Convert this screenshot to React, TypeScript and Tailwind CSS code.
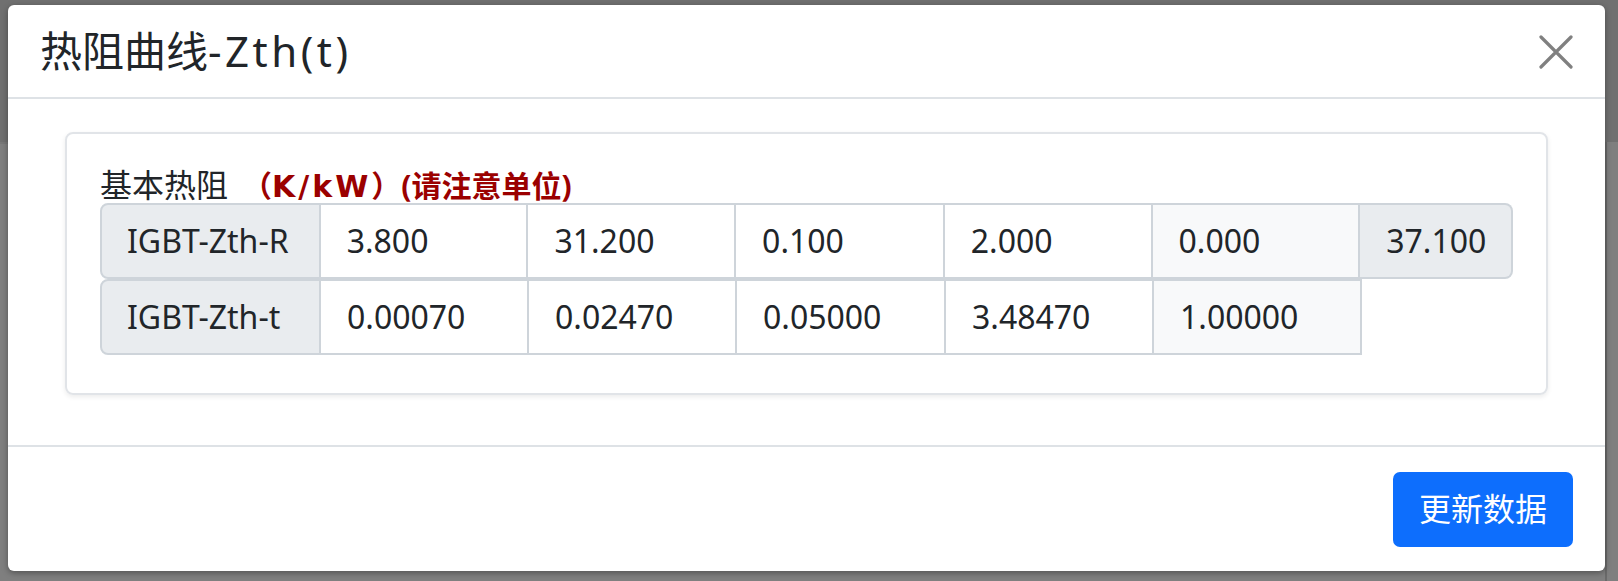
import React from "react";

const font = "font-['Noto_Sans','Noto_Sans_CJK_SC',sans-serif]";

type RowProps = {
  label: string;
  values: string[];
  total?: string;
};

const widths = ["w-[208px]", "w-[208px]", "w-[209px]", "w-[208px]", "w-[208px]"];

function ZthRow({ label, values, total }: RowProps) {
  return (
    <div className="flex h-[76px] text-[32px] text-[#212529]">
      <div className="w-[221px] flex items-center pl-[25px] bg-[#e9ecef] border-2 border-[#ced4da] rounded-l-[8px]">
        {label}
      </div>
      {values.map((v, i) => (
        <div
          key={i}
          className={
            widths[i] +
            " flex items-center pl-[26px] border-y-2 border-r-2 border-[#ced4da] " +
            (i === 4 ? "bg-[#f8f9fa]" : "bg-white")
          }
        >
          {v}
        </div>
      ))}
      {total && (
        <div className="w-[153px] flex items-center pl-[26px] bg-[#e9ecef] border-y-2 border-r-2 border-[#ced4da] rounded-r-[8px]">
          {total}
        </div>
      )}
    </div>
  );
}

export default function App() {
  return (
    <div className={"relative w-[1618px] h-[581px] overflow-hidden bg-[#7f7f7f] " + font}>
      <div className="h-[142px] bg-[#707070]" />
      <div className="flex h-[439px]">
        <div className="w-[8px] border-t-2 border-[#777]" />
        <div className="flex-1" />
        <div className="w-[13px] border-l-2 border-[#6a6a6a]" />
      </div>

      {/* modal */}
      <div className="absolute left-[8px] top-[5px] w-[1597px] h-[566px] bg-white rounded-[6px] shadow-[0_2px_6px_rgba(0,0,0,0.35)] flex flex-col">
        <div className="h-[92px] flex items-center justify-between pl-[32px] pr-[32px] border-b-2 border-[#dee2e6] box-content">
          <div className="text-[42px] text-[#212529] leading-[60px]">
            热阻曲线<span className="tracking-[3.5px]">-Zth(t)</span>
          </div>
          <svg width="34" height="34" viewBox="0 0 34 34" className="mt-[1px]">
            <path d="M2 2L32 32M32 2L2 32" stroke="#808080" strokeWidth="3.2" strokeLinecap="round" />
          </svg>
        </div>

        <div className="px-[57px] pt-[33px] pb-[50px]">
          <div className="h-[263px] border-2 border-[#e1e4e8] rounded-[8px] shadow-[0_2px_5px_rgba(0,0,0,0.08)] px-[33px] pt-[33px]">
            <div className="h-[36px] leading-[36px] text-[#212529] whitespace-nowrap">
              <span className="text-[32px]">基本热阻</span>
              <span className="ml-[14px] text-[30px] font-bold text-[#9b0000]">
                （<span className="font-['DejaVu_Sans',sans-serif] text-[30px] tracking-[3px]">K/kW</span>）(请注意单位)
              </span>
            </div>
            <ZthRow
              label="IGBT-Zth-R"
              values={["3.800", "31.200", "0.100", "2.000", "0.000"]}
              total="37.100"
            />
            <ZthRow
              label="IGBT-Zth-t"
              values={["0.00070", "0.02470", "0.05000", "3.48470", "1.00000"]}
            />
          </div>
        </div>

        <div className="flex-1 border-t-2 border-[#dee2e6] flex items-center justify-end pr-[32px]">
          <button className="w-[180px] h-[75px] rounded-[7px] bg-[#0d6efd] text-white text-[32px] flex items-center justify-center">
            更新数据
          </button>
        </div>
      </div>
    </div>
  );
}
